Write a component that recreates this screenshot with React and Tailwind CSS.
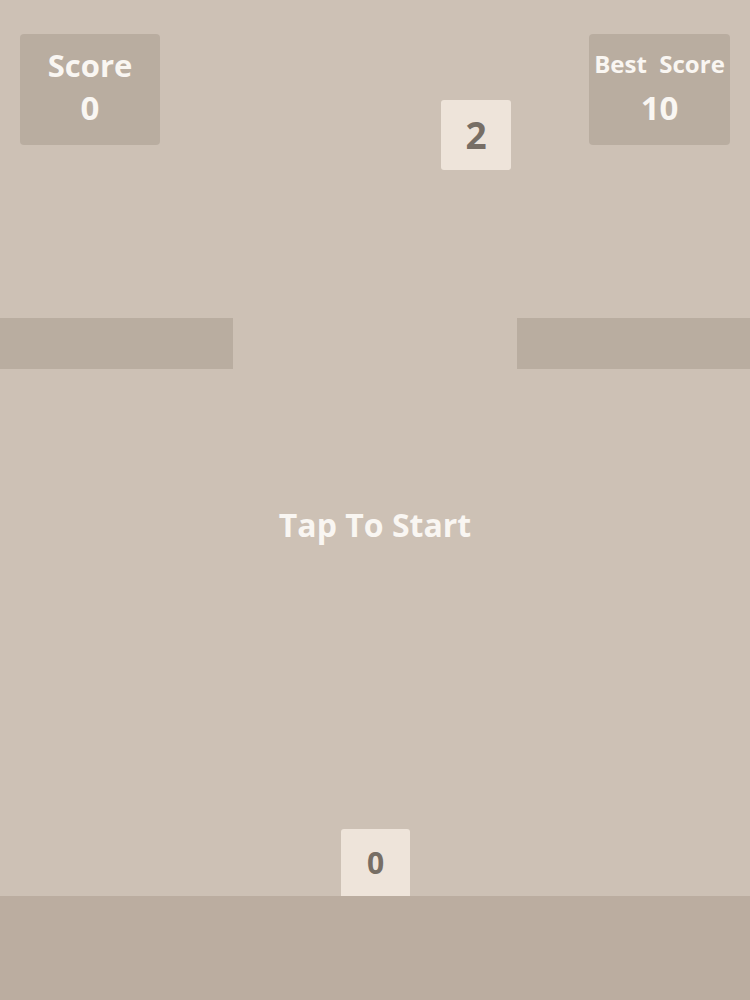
import React from 'react';

const font = { fontFamily: '"Open Sans", "Noto Sans", sans-serif' };

const Tile = ({ value, className }) => (
  <div
    className={`absolute flex items-center justify-center bg-[#eee4da] text-[#776e65] font-bold rounded-[3px] ${className}`}
  >
    {value}
  </div>
);

export default function App() {
  return (
    <div
      className="relative w-[750px] h-[1000px] overflow-hidden bg-[#cdc1b5] select-none"
      style={font}
    >
      {/* HUD */}
      <div className="flex justify-between items-start px-5 pt-[34px]">
        <div className="w-[140px] h-[111px] rounded-[4px] bg-[#b9ada0] flex flex-col items-center pt-[12px] text-[#f9f6f2] font-bold">
          <span className="text-[31px] leading-[38px]">Score</span>
          <span className="text-[33px] leading-[40px] mt-[4px]">0</span>
        </div>
        <div className="w-[141px] h-[111px] rounded-[4px] bg-[#b9ada0] flex flex-col items-center pt-[13px] text-[#f9f6f2] font-bold">
          <span className="text-[24px] leading-[34px] whitespace-pre">Best  Score</span>
          <span className="text-[33px] leading-[40px] mt-[7px]">10</span>
        </div>
      </div>

      {/* falling tile */}
      <Tile value="2" className="left-[441px] top-[100px] w-[70px] h-[70px] text-[37px]" />

      {/* platforms */}
      <div className="absolute left-0 top-[318px] w-[233px] h-[51px] bg-[#b9ada0]" />
      <div className="absolute left-[517px] top-[318px] w-[233px] h-[51px] bg-[#b9ada0]" />

      {/* prompt */}
      <div className="absolute left-0 right-0 top-[503px] text-center text-[32px] leading-[44px] font-bold text-[#f9f6f2]">
        Tap To Start
      </div>

      {/* player tile */}
      <Tile value="0" className="left-[341px] top-[829px] w-[69px] h-[67px] text-[30px] rounded-b-none" />

      {/* ground */}
      <div className="absolute left-0 bottom-0 w-full h-[104px] bg-[#bbada0]" />
    </div>
  );
}
